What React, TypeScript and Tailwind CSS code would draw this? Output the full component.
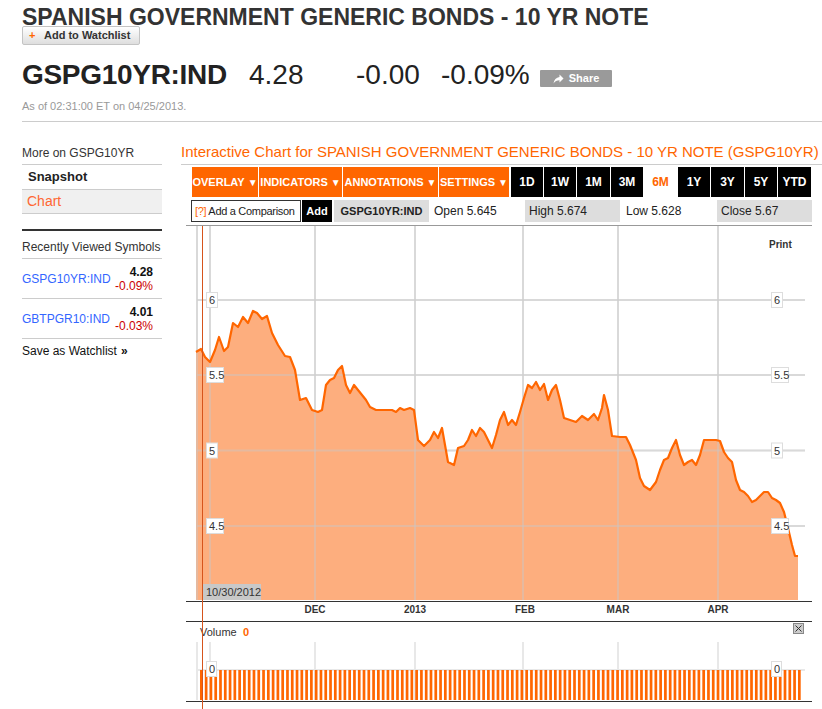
import React from "react";

const pts: [number, number][] = [
  [196, 352], [201, 349], [205, 357], [210, 362], [215, 350], [219, 337], [224, 351], [228, 347],
  [233, 323], [238, 327], [243, 317], [248, 323], [253, 311], [257, 313], [262, 319], [267, 316],
  [272, 333], [278, 345], [285, 356], [290, 357], [295, 370], [300, 400], [306, 398], [312, 410],
  [318, 412], [322, 410], [326, 385], [330, 380], [334, 378], [338, 370], [342, 366], [346, 385],
  [350, 393], [354, 385], [358, 390], [362, 395], [366, 400], [370, 407], [376, 410], [384, 410],
  [392, 410], [396, 412], [400, 408], [404, 410], [410, 408], [414, 410], [418, 440], [424, 446],
  [430, 440], [434, 432], [438, 438], [442, 428], [448, 462], [454, 465], [458, 448], [464, 446],
  [468, 440], [472, 430], [476, 436], [480, 428], [484, 432], [488, 440], [492, 448], [496, 435],
  [500, 420], [504, 412], [508, 425], [512, 420], [516, 425], [520, 412], [524, 398], [528, 385],
  [532, 388], [536, 382], [540, 390], [544, 384], [548, 400], [552, 390], [556, 385], [560, 400],
  [564, 418], [570, 420], [576, 422], [582, 416], [588, 420], [594, 414], [598, 420], [602, 408],
  [604, 395], [608, 410], [612, 436], [620, 437], [626, 437], [630, 445], [636, 460], [640, 478],
  [644, 486], [650, 490], [656, 482], [660, 470], [664, 460], [668, 458], [672, 448], [676, 440],
  [680, 455], [684, 465], [688, 462], [692, 460], [696, 465], [700, 455], [704, 440], [708, 440],
  [716, 440], [720, 441], [724, 452], [728, 458], [732, 462], [736, 480], [740, 490], [744, 492],
  [748, 496], [752, 502], [756, 500], [760, 496], [764, 492], [768, 492], [772, 498], [776, 500],
  [780, 503], [784, 512], [788, 528], [792, 545], [795, 556], [798, 556],
];

const vGrid = [197, 210, 315, 415, 523, 618, 718];
const hGrid = [
  { y: 300, label: "6", w: 11 },
  { y: 375, label: "5.5", w: 17 },
  { y: 450.5, label: "5", w: 11 },
  { y: 526, label: "4.5", w: 17 },
];
const months = [
  { x: 315, t: "DEC" },
  { x: 415, t: "2013" },
  { x: 525, t: "FEB" },
  { x: 618, t: "MAR" },
  { x: 718, t: "APR" },
];

const orangeTabs = [
  { t: "OVERLAY", w: "w-[66px]" },
  { t: "INDICATORS", w: "w-[83px]" },
  { t: "ANNOTATIONS", w: "w-[95px]" },
  { t: "SETTINGS", w: "w-[70px]" },
];
const ranges = [
  { t: "1D", w: "w-[32px]" },
  { t: "1W", w: "w-[32px]" },
  { t: "1M", w: "w-[33px]" },
  { t: "3M", w: "w-[32px]" },
  { t: "6M", w: "w-[33px]", active: true },
  { t: "1Y", w: "w-[32px]" },
  { t: "3Y", w: "w-[33px]" },
  { t: "5Y", w: "w-[32px]" },
  { t: "YTD", w: "w-[33px]" },
];

const recent = [
  { sym: "GSPG10YR:IND", px: "4.28", chg: "-0.09%" },
  { sym: "GBTPGR10:IND", px: "4.01", chg: "-0.03%" },
];

const FONT = "'Liberation Sans', Arial, sans-serif";

function PriceChart() {
  const line = pts.map((p, i) => `${i ? "L" : "M"}${p[0]} ${p[1]}`).join(" ");
  const area = `${line} L798 600 L196 600 Z`;
  const bars = Array.from({ length: 126 }, (_, i) => 200 + i * 4.784);
  return (
    <svg width="641" height="485" viewBox="181 224 641 485" className="block">
      <line x1="186" y1="225.5" x2="812" y2="225.5" stroke="#999" strokeWidth="1" />
      {vGrid.map((x) => (
        <line key={x} x1={x} y1="226" x2={x} y2="600" stroke="#e8e8e8" strokeWidth="2" />
      ))}
      {hGrid.map((g) => (
        <line key={g.y} x1="197" y1={g.y} x2="805" y2={g.y} stroke="#e8e8e8" strokeWidth="2" />
      ))}
      <path d={area} fill="#fdae7e" />
      {vGrid.map((x) => (
        <line key={x} x1={x} y1="226" x2={x} y2="600" stroke="#c8c8c8" strokeOpacity="0.45" strokeWidth="2" />
      ))}
      {hGrid.map((g) => (
        <line key={g.y} x1="197" y1={g.y} x2="805" y2={g.y} stroke="#c8c8c8" strokeOpacity="0.45" strokeWidth="2" />
      ))}
      <path d={line} fill="none" stroke="#ff6600" strokeWidth="2.2" strokeLinejoin="round" />
      {hGrid.map((g) => (
        <g key={g.label} fontSize="11" fill="#333" fontFamily={FONT}>
          <rect x="206.5" y={g.y - 7.5} width={g.w} height="15" fill="#fff" stroke="#ddd" />
          <text x="209" y={g.y + 4}>{g.label}</text>
          <rect x="771.5" y={g.y - 7.5} width={g.w} height="15" fill="#fff" stroke="#ddd" />
          <text x="774" y={g.y + 4}>{g.label}</text>
        </g>
      ))}
      <text x="769" y="248" fontSize="10" fontWeight="bold" fill="#333" fontFamily={FONT}>
        Print
      </text>
      <rect x="203" y="584" width="58" height="16" fill="#c8c8c8" />
      <text x="206" y="596" fontSize="11" fill="#333" fontFamily={FONT}>
        10/30/2012
      </text>
      <line x1="186" y1="601.5" x2="812" y2="601.5" stroke="#333" strokeWidth="1" />
      {months.map((m) => (
        <text key={m.t} x={m.x} y="613" textAnchor="middle" fontSize="10" fontWeight="bold" fill="#333" fontFamily={FONT}>
          {m.t}
        </text>
      ))}
      <line x1="186" y1="621.5" x2="812" y2="621.5" stroke="#333" strokeWidth="1" />

      {/* volume */}
      <text x="200" y="636" fontSize="11" fill="#333" fontFamily={FONT}>
        Volume
      </text>
      <text x="243" y="636" fontSize="11" fontWeight="bold" fill="#ff6600" fontFamily={FONT}>
        0
      </text>
      <rect x="793.5" y="623.5" width="10" height="10" fill="#ccc" stroke="#888" />
      <path d="M795.5 625.5 L801.5 631.5 M801.5 625.5 L795.5 631.5" stroke="#333" strokeWidth="1" />
      {vGrid.map((x) => (
        <line key={x} x1={x} y1="642" x2={x} y2="700" stroke="#e8e8e8" strokeWidth="2" />
      ))}
      <line x1="197" y1="670" x2="805" y2="670" stroke="#e8e8e8" strokeWidth="2" />
      {bars.map((x, i) => (
        <rect key={i} x={x} y="670" width="2.7" height="30" fill="#ff6600" />
      ))}
      <rect x="206.5" y="661.5" width="10" height="15" fill="#fff" stroke="#ddd" />
      <text x="209" y="673" fontSize="11" fill="#333" fontFamily={FONT}>0</text>
      <rect x="771.5" y="661.5" width="10" height="15" fill="#fff" stroke="#ddd" />
      <text x="774" y="673" fontSize="11" fill="#333" fontFamily={FONT}>0</text>
      <line x1="186" y1="701.5" x2="812" y2="701.5" stroke="#333" strokeWidth="1" />

      <line x1="202.5" y1="226" x2="202.5" y2="709" stroke="#d6541c" strokeWidth="1" />
    </svg>
  );
}

export default function App() {
  return (
    <div className="w-[822px] h-[709px] overflow-hidden bg-white text-[#333] font-['Liberation_Sans',Arial,sans-serif]">
      {/* header */}
      <div className="pl-[22px] pt-[4px]">
        <h1 className="text-[23px] leading-[26px] font-bold text-[#333] whitespace-nowrap">
          SPANISH GOVERNMENT GENERIC BONDS - 10 YR NOTE
        </h1>
        <button className="-mt-[4px] flex items-center h-[19px] w-[118px] rounded-[2px] border border-[#c4c4c4] bg-gradient-to-b from-white to-[#dedede] text-[11px] font-bold text-[#333]">
          <span className="ml-[6px] w-[14px] text-left text-[#ff6600]">+</span>
          <span className="ml-[1px]">Add to Watchlist</span>
        </button>
        <div className="mt-[14px] flex items-start h-[32px] text-[28px] leading-[32px] text-[#222] whitespace-nowrap">
          <span className="w-[227px] font-bold tracking-[-0.3px]">GSPG10YR:IND</span>
          <span className="w-[107px]">4.28</span>
          <span className="w-[85px]">-0.00</span>
          <span className="w-[99px]">-0.09%</span>
          <span className="mt-[11px] flex items-center justify-center gap-[5px] h-[17px] w-[72px] bg-[#9a9a9a] text-white text-[11px] leading-none font-bold rounded-[1px]">
            <svg width="11" height="10" viewBox="0 0 11 10">
              <path d="M6.5 0.5 L10.5 4.5 L6.5 8.5 V6.2 C3.8 6.2 2 7 0.5 9.5 C1 5.8 3.2 3.4 6.5 3 Z" fill="#fff" />
            </svg>
            Share
          </span>
        </div>
        <div className="mt-[8px] text-[11px] leading-[14px] text-[#999]">As of 02:31:00 ET on 04/25/2013.</div>
      </div>
      <div className="mt-[8px] ml-[22px] border-t border-[#ccc]" />

      <div className="flex">
        {/* sidebar */}
        <div className="ml-[22px] w-[140px] pt-[23px] text-[12px] text-[#333]">
          <div className="leading-[16px] pb-[3px] border-b border-[#ccc]">More on GSPG10YR</div>
          <div className="h-[25px] pl-[6px] flex items-center border-b border-[#ccc] text-[13px] font-bold text-[#222]">
            Snapshot
          </div>
          <div className="h-[24px] pl-[5px] flex items-center bg-[#f0f0f0] border-b border-[#ccc] text-[14px] text-[#ff6633]">
            Chart
          </div>
          <div className="mt-[15px] h-[2px] bg-[#333]" />
          <div className="mt-[8px] leading-[16px] pb-[3px] border-b border-[#ccc]">Recently Viewed Symbols</div>
          {recent.map((r) => (
            <div key={r.sym} className="h-[40px] flex items-center justify-between pr-[9px] border-b border-[#ccc]">
              <span className="text-[#3366ff]">{r.sym}</span>
              <div className="flex flex-col items-end leading-[14px]">
                <span className="font-bold text-[#111]">{r.px}</span>
                <span className="text-[#cc0000]">{r.chg}</span>
              </div>
            </div>
          ))}
          <div className="h-[24px] flex items-center text-[#111]">
            Save as Watchlist <span className="ml-[4px] font-bold">»</span>
          </div>
        </div>

        {/* chart column */}
        <div className="ml-[19px] w-[641px] pt-[20px]">
          <div className="text-[15px] leading-[20px] text-[#ff6600] whitespace-nowrap pb-[2px] border-b border-[#ccc]">
            Interactive Chart for SPANISH GOVERNMENT GENERIC BONDS - 10 YR NOTE (GSPG10YR)
          </div>
          <div className="mt-[2px] ml-[11px] flex h-[30px]">
            <div className="flex gap-px">
              {orangeTabs.map((t) => (
                <div key={t.t} className={`${t.w} bg-[#ff6600] text-white text-[11px] font-bold flex items-center justify-center whitespace-nowrap`}>
                  {t.t} <span className="ml-[3px] text-[10px]">▼</span>
                </div>
              ))}
            </div>
            <div className="ml-[2px] flex gap-px">
              {ranges.map((r) => (
                <div
                  key={r.t}
                  className={
                    r.active
                      ? `${r.w} bg-white text-[#ff6600] text-[12px] font-bold flex items-center justify-center`
                      : `${r.w} bg-black text-white text-[12px] font-bold flex items-center justify-center`
                  }
                >
                  {r.t}
                </div>
              ))}
            </div>
          </div>
          <div className="mt-[3px] ml-[10px] flex h-[22px] text-[12px] text-[#222] whitespace-nowrap">
            <div className="w-[110px] border border-[#333] flex items-center pl-[3px] text-[11px] tracking-[-0.3px]">
              <span className="text-[#ff6600] mr-[2px]">[?]</span>Add a Comparison
            </div>
            <div className="ml-[1px] w-[30px] bg-black text-white font-bold text-[11px] flex items-center justify-center">Add</div>
            <div className="ml-[2px] w-[95px] bg-[#dddddd] font-bold text-[11px] flex items-center justify-center">GSPG10YR:IND</div>
            <div className="w-[96px] pl-[5px] flex items-center">Open 5.645</div>
            <div className="w-[95px] bg-[#dddddd] pl-[4px] flex items-center">High 5.674</div>
            <div className="w-[97px] pl-[6px] flex items-center">Low 5.628</div>
            <div className="w-[95px] bg-[#dddddd] pl-[4px] flex items-center">Close 5.67</div>
          </div>
          <div className="mt-[2px]">
            <PriceChart />
          </div>
        </div>
      </div>
    </div>
  );
}
